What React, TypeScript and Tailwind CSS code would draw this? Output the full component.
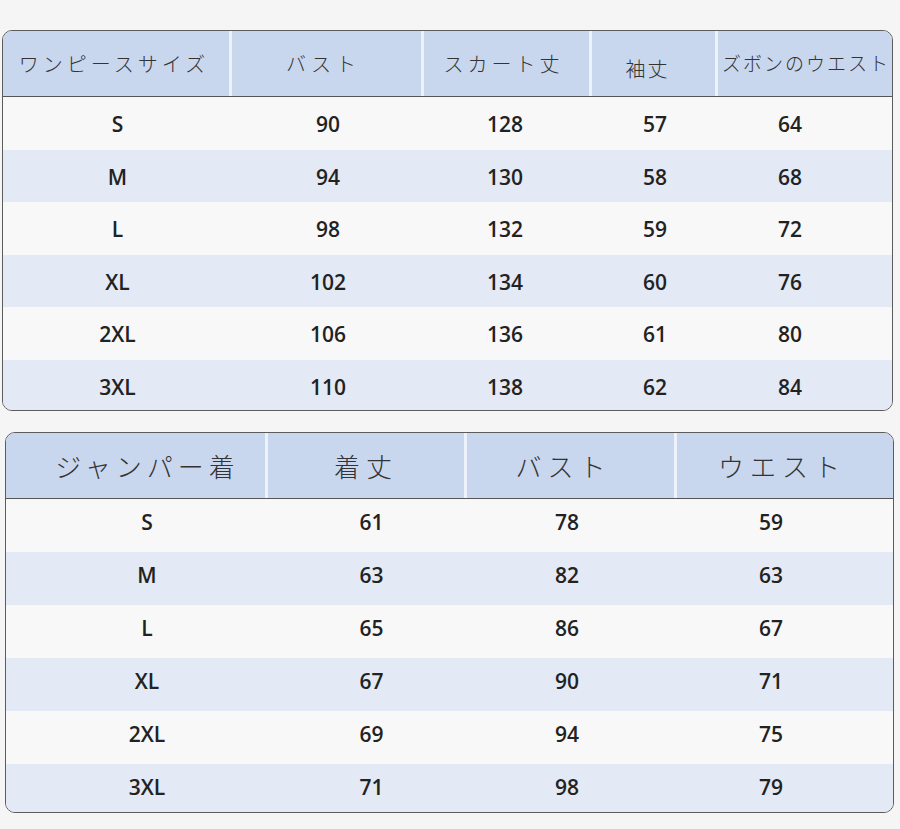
const dressRows = [
  ['S', '90', '128', '57', '64'],
  ['M', '94', '130', '58', '68'],
  ['L', '98', '132', '59', '72'],
  ['XL', '102', '134', '60', '76'],
  ['2XL', '106', '136', '61', '80'],
  ['3XL', '110', '138', '62', '84'],
];

const jumperRows = [
  ['S', '61', '78', '59'],
  ['M', '63', '82', '63'],
  ['L', '65', '86', '67'],
  ['XL', '67', '90', '71'],
  ['2XL', '69', '94', '75'],
  ['3XL', '71', '98', '79'],
];

const jp = { fontFamily: '"Noto Sans CJK JP", "Noto Sans", sans-serif' };
const num = { fontFamily: '"Open Sans", "Noto Sans", sans-serif' };

export default function App() {
  return (
    <div className="w-[900px] h-[829px] bg-[#f5f5f5] overflow-hidden pt-[30px]">
      {/* ワンピース */}
      <div className="ml-[2px] w-[891px] h-[381px] border border-[#5c5c5c] rounded-[10px] overflow-hidden bg-[#f8f8f8] flex flex-col">
        <div
          className="grid grid-cols-[229px_192px_168px_126px_1fr] h-[66px] shrink-0 bg-[#c9d7ee] border-b border-[#555] text-[#333] text-[20px] font-light"
          style={jp}
        >
          <div className="flex items-center justify-center tracking-[4px] border-r-[3px] border-[#eef3fb] pr-[4px]">ワンピースサイズ</div>
          <div className="flex items-center justify-center tracking-[5px] border-r-[3px] border-[#eef3fb] pr-[6px]">バスト</div>
          <div className="flex items-center justify-center tracking-[4px] border-r-[3px] border-[#eef3fb] pr-[6px]">スカート丈</div>
          <div className="flex items-center justify-center tracking-[2px] border-r-[3px] border-[#eef3fb] pt-[10px] pr-[12px]">袖丈</div>
          <div className="flex items-center pl-[4px] whitespace-nowrap tracking-[2px] text-[19px]">ズボンのウエスト</div>
        </div>
        {dressRows.map((r, i) => (
          <div
            key={r[0]}
            className={`grid grid-cols-[229px_192px_168px_126px_1fr] h-[52.6px] shrink-0 items-center pt-[3px] text-[21px] font-semibold text-[#222] ${
              i % 2 === 1 ? 'bg-[#e3e9f5]' : 'bg-[#f8f8f8]'
            }`}
            style={num}
          >
            <div className="text-center">{r[0]}</div>
            <div className="text-center">{r[1]}</div>
            <div className="text-center pr-[6px]">{r[2]}</div>
            <div className="text-center">{r[3]}</div>
            <div className="text-center pr-[30px]">{r[4]}</div>
          </div>
        ))}
      </div>

      {/* ジャンパー */}
      <div className="mt-[21px] ml-[5px] w-[889px] h-[381px] border border-[#5c5c5c] rounded-[10px] overflow-hidden bg-[#f8f8f8] flex flex-col">
        <div
          className="grid grid-cols-[262px_199px_210px_1fr] h-[66px] shrink-0 bg-[#c9d7ee] border-b border-[#555] text-[#333] text-[26px] font-light"
          style={jp}
        >
          <div className="flex items-center justify-center tracking-[5px] border-r-[3px] border-[#eef3fb] pl-[24px]">ジャンパー着</div>
          <div className="flex items-center justify-center tracking-[6px] border-r-[3px] border-[#eef3fb]">着丈</div>
          <div className="flex items-center justify-center tracking-[6px] border-r-[3px] border-[#eef3fb] pr-[14px]">バスト</div>
          <div className="flex items-center justify-center tracking-[6px] pr-[6px]">ウエスト</div>
        </div>
        {jumperRows.map((r, i) => (
          <div
            key={r[0]}
            className={`grid grid-cols-[262px_199px_210px_1fr] h-[53px] shrink-0 items-center pb-[5px] text-[21px] font-semibold text-[#222] ${
              i % 2 === 1 ? 'bg-[#e3e9f5]' : 'bg-[#f8f8f8]'
            }`}
            style={num}
          >
            <div className="text-center pl-[20px]">{r[0]}</div>
            <div className="text-center pl-[8px]">{r[1]}</div>
            <div className="text-center pr-[10px]">{r[2]}</div>
            <div className="text-center pr-[28px]">{r[3]}</div>
          </div>
        ))}
      </div>
    </div>
  );
}
